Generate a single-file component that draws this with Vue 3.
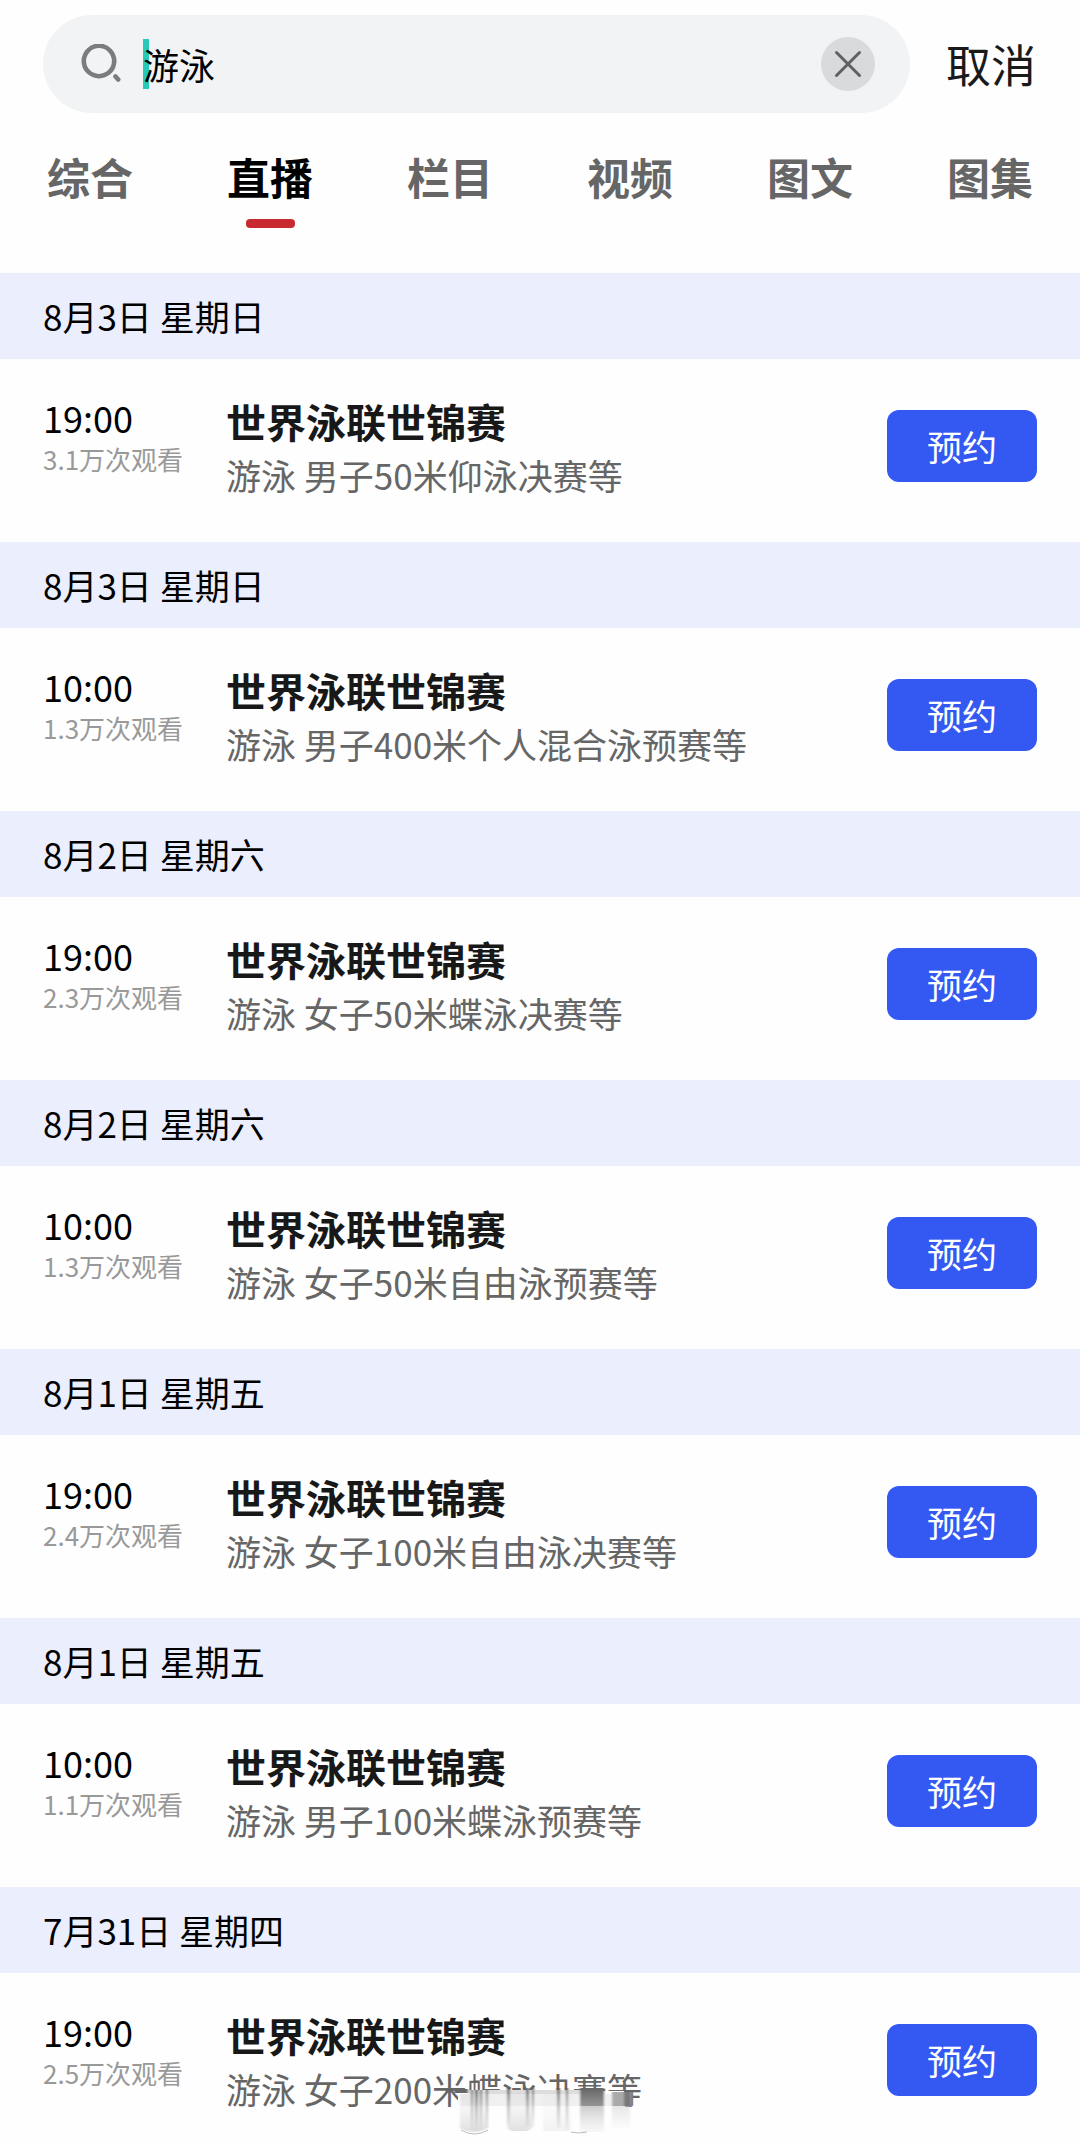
<template>
  <div class="search-page">
    <header class="search-header">
      <form class="search-box" role="search" @submit.prevent>
        <svg class="search-icon" viewBox="0 0 40 40" aria-hidden="true">
          <circle cx="18" cy="17" r="15.2" />
          <path d="M34.5 32.5 L37.2 35.5" />
        </svg>
        <div class="search-field">
          <span class="caret"></span>
          <input v-model="keyword" type="text" class="search-input" aria-label="搜索" />
        </div>
        <button type="button" class="clear-button" aria-label="清空" @click="clearKeyword">
          <svg viewBox="0 0 54 54" aria-hidden="true">
            <path d="M15.5 15.5 L38.5 38.5 M38.5 15.5 L15.5 38.5" />
          </svg>
        </button>
      </form>
      <button type="button" class="cancel-button">取消</button>
    </header>

    <nav class="tabs">
      <button
        v-for="tab in tabs"
        :key="tab"
        type="button"
        class="tab"
        :class="{ active: tab === activeTab }"
        @click="activeTab = tab"
      >
        {{ tab }}
      </button>
    </nav>

    <main class="live-list">
      <section v-for="(item, index) in lives" :key="index">
        <h2 class="live-date">{{ item.date }}</h2>
        <div class="live-row">
          <div class="live-when">
            <p class="live-time">{{ item.time }}</p>
            <p class="live-views">{{ item.views }}万次观看</p>
          </div>
          <div class="live-info">
            <h3 class="live-title">世界泳联世锦赛</h3>
            <p class="live-desc">{{ item.desc }}</p>
            <!-- smudge over the end of the last line -->
            <svg v-if="index === lives.length - 1" class="smudge" viewBox="0 0 180 48" aria-hidden="true">
              <defs>
                <linearGradient id="fade" x1="0" y1="0" x2="0" y2="1">
                  <stop offset="0" stop-color="#555" stop-opacity="0.9" />
                  <stop offset="0.4" stop-color="#777" stop-opacity="0.5" />
                  <stop offset="1" stop-color="#aaa" stop-opacity="0.15" />
                </linearGradient>
                <linearGradient id="fog" x1="0" y1="0" x2="0" y2="1">
                  <stop offset="0" stop-color="#ccc" stop-opacity="0.3" />
                  <stop offset="0.4" stop-color="#ddd" stop-opacity="0.3" />
                  <stop offset="1" stop-color="#bbb" stop-opacity="0.45" />
                </linearGradient>
                <linearGradient id="block" x1="0" y1="0" x2="0" y2="1">
                  <stop offset="0" stop-color="#666" />
                  <stop offset="1" stop-color="#959595" />
                </linearGradient>
                <linearGradient id="tail" x1="0" y1="0" x2="0" y2="1">
                  <stop offset="0" stop-color="#ccc" />
                  <stop offset="1" stop-color="#eee" stop-opacity="0.4" />
                </linearGradient>
                <filter id="soft" x="-10%" y="-10%" width="120%" height="120%">
                  <feGaussianBlur stdDeviation="0.9 0.5" />
                </filter>
              </defs>
              <path class="smudge-base" d="M4 3 H170 V20 H178 V48 H4 Z" />
              <g filter="url(#soft)">
                <rect x="0" y="1" width="14" height="4" fill="#666" />
                <rect x="14" y="2" width="112" height="4" fill="#ddd" />
                <rect x="6" y="6" width="166" height="12" fill="#f0f0f0" />
                <path d="M6 6 H34 V40 Q20 48 6 40 Z" fill="url(#fog)" />
                <rect x="53" y="5" width="25" height="38" rx="6" fill="url(#fog)" />
                <rect x="89" y="5" width="28" height="38" rx="3" fill="url(#fog)" opacity="0.4" />
                <rect x="17" y="2" width="2" height="40" fill="url(#fade)" />
                <rect x="21" y="2" width="3" height="41" fill="url(#fade)" />
                <rect x="26" y="2" width="2" height="40" fill="url(#fade)" />
                <rect x="32" y="2" width="2" height="38" fill="url(#fade)" />
                <rect x="53" y="0" width="3" height="36" fill="url(#fade)" />
                <rect x="72" y="0" width="3" height="38" fill="url(#fade)" />
                <rect x="78" y="0" width="2" height="40" fill="url(#fade)" />
                <rect x="103" y="0" width="3" height="40" fill="url(#fade)" />
                <rect x="112" y="0" width="2" height="42" fill="url(#fade)" />
                <rect x="126" y="0" width="24" height="18" fill="url(#block)" />
                <rect x="126" y="18" width="24" height="26" fill="url(#tail)" />
                <rect x="158" y="4" width="20" height="14" fill="#aaa" />
                <rect x="158" y="18" width="18" height="22" fill="url(#tail)" opacity="0.5" />
                <rect x="170" y="4" width="7" height="14" fill="#777" />
              </g>
              <path class="smudge-edge" d="M7 42 Q20 50 34 42 M117 44 Q124 46 133 44" />
            </svg>
          </div>
          <button type="button" class="book-button">预约</button>
        </div>
      </section>
    </main>
  </div>
</template>

<script setup>
import { ref } from 'vue'

const keyword = ref('游泳')
const tabs = ['综合', '直播', '栏目', '视频', '图文', '图集']
const activeTab = ref('直播')

const lives = [
  { date: '8月3日 星期日', time: '19:00', views: '3.1', desc: '游泳 男子50米仰泳决赛等' },
  { date: '8月3日 星期日', time: '10:00', views: '1.3', desc: '游泳 男子400米个人混合泳预赛等' },
  { date: '8月2日 星期六', time: '19:00', views: '2.3', desc: '游泳 女子50米蝶泳决赛等' },
  { date: '8月2日 星期六', time: '10:00', views: '1.3', desc: '游泳 女子50米自由泳预赛等' },
  { date: '8月1日 星期五', time: '19:00', views: '2.4', desc: '游泳 女子100米自由泳决赛等' },
  { date: '8月1日 星期五', time: '10:00', views: '1.1', desc: '游泳 男子100米蝶泳预赛等' },
  { date: '7月31日 星期四', time: '19:00', views: '2.5', desc: '游泳 女子200米蝶泳决赛等' },
]

const clearKeyword = () => {
  keyword.value = ''
}
</script>

<style>
body {
  margin: 0;
  background: #fefefe;
}
</style>

<style scoped>
.search-page {
  display: flex;
  flex-direction: column;
  height: 100vh;
  overflow: hidden;
  background: #fefefe;
  color: #000;
  font-family: 'Noto Sans CJK SC', 'Noto Sans', sans-serif;
}

button,
input {
  margin: 0;
  padding: 0;
  border: none;
  background: none;
  color: inherit;
  font-family: inherit;
}

button {
  cursor: pointer;
}

h2,
h3,
p {
  margin: 0;
}

.search-header {
  display: flex;
  align-items: center;
  gap: 36px;
  padding: 15px 44px 0 43px;
}

.search-box {
  display: flex;
  flex: 1;
  align-items: center;
  min-width: 0;
  height: 98px;
  padding: 0 35px 0 38px;
  box-sizing: border-box;
  border-radius: 49px;
  background: #f1f3f5;
}

.search-icon {
  flex: none;
  width: 40px;
  height: 40px;
  fill: none;
  stroke: #7b7c7d;
  stroke-width: 4.6;
  stroke-linecap: round;
}

.search-field {
  position: relative;
  flex: 1;
  min-width: 0;
  margin-left: 22px;
}

.caret {
  position: absolute;
  left: 0;
  top: 1px;
  width: 6px;
  height: 50px;
  background: #27c9b7;
}

.search-input {
  position: relative;
  display: block;
  width: 100%;
  height: 52px;
  font-size: 36px;
  line-height: 52px;
  outline: none;
}

.clear-button {
  flex: none;
  width: 54px;
  height: 54px;
  border-radius: 50%;
  background: #d9dadc;
}

.clear-button svg {
  display: block;
  fill: none;
  stroke: #5f6062;
  stroke-width: 3;
  stroke-linecap: round;
}

.cancel-button {
  flex: none;
  color: #1a1a1a;
  font-size: 45px;
  line-height: 56px;
}

.tabs {
  display: grid;
  grid-template-columns: repeat(6, 1fr);
  padding: 35px 0 45px;
}

.tab {
  display: flex;
  flex-direction: column;
  align-items: center;
  gap: 15px;
  color: #666;
  font-size: 43px;
  font-weight: bold;
  line-height: 56px;
}

.tab::after {
  content: '';
  width: 49px;
  height: 9px;
  border-radius: 4px;
}

.tab.active {
  color: #000;
}

.tab.active::after {
  background: #c92a30;
}

.live-list {
  flex: 1;
  min-height: 0;
  overflow-y: auto;
  scrollbar-width: none;
}

.live-date {
  padding: 0 43px;
  background: #ebeefd;
  font-size: 35px;
  font-weight: normal;
  line-height: 86px;
}

.live-row {
  display: grid;
  grid-template-columns: 183px 1fr 150px;
  align-items: start;
  padding: 36px 43px 41px;
}

.live-time {
  font-size: 36px;
  line-height: 44px;
}

.live-views {
  color: #999;
  font-size: 26px;
  line-height: 40px;
}

.live-info {
  position: relative;
  white-space: nowrap;
}

.live-title {
  color: #181818;
  font-size: 40px;
  font-weight: bold;
  line-height: 53px;
}

.live-desc {
  color: #666;
  font-size: 35px;
  line-height: 53px;
}

.smudge {
  position: absolute;
  left: 228px;
  top: 79px;
  width: 180px;
  height: 48px;
}

.smudge-base {
  fill: #fefefe;
}

.smudge-edge {
  fill: none;
  stroke: #bbb;
  stroke-width: 1;
}

.book-button {
  height: 72px;
  margin-top: 15px;
  border-radius: 12px;
  background: #3459f3;
  color: #fff;
  font-size: 35px;
  line-height: 70px;
}
</style>
